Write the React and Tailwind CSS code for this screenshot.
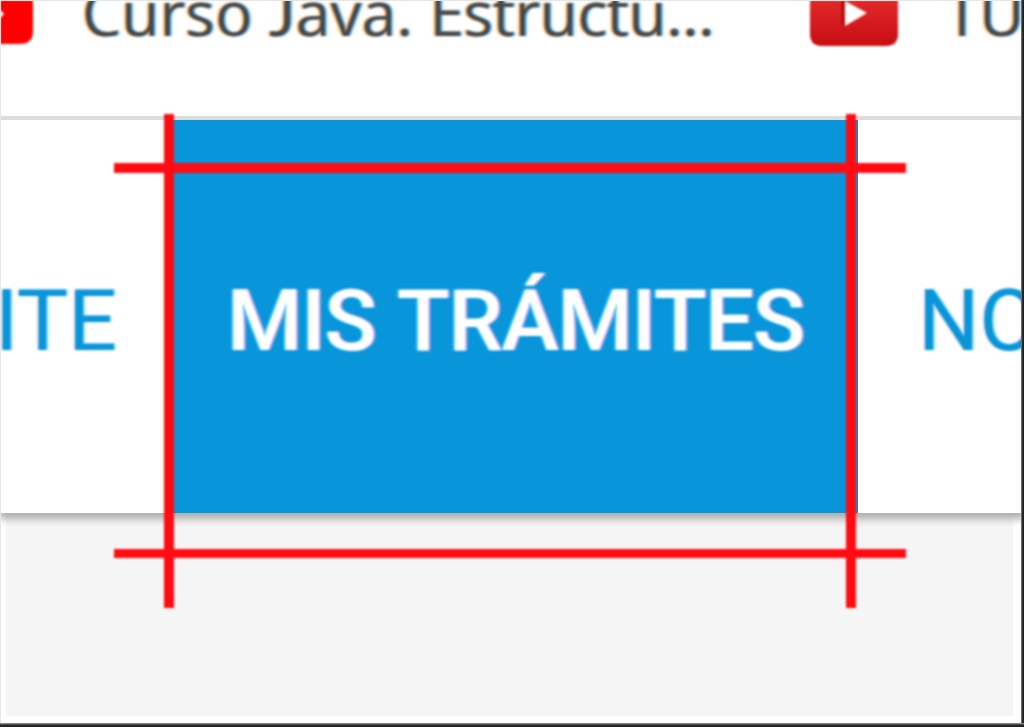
const softText = 'blur-[0.9px] whitespace-nowrap';
const barText =
  softText +
  " font-['Open_Sans',sans-serif] text-[62px] leading-[25px] text-[#45484d] [text-shadow:-2px_0_1px_#ffb860,2px_0_1px_#6fc8ff]";
const navText = softText + " font-['Roboto',sans-serif] text-[86px] leading-none";

function PlayIcon() {
  return (
    <svg className="block h-[48px] w-[90px] shrink-0 blur-[1.2px]" viewBox="0 0 90 48">
      <defs>
        <linearGradient id="play-red" x1="0" y1="0" x2="0" y2="1">
          <stop offset="0" stopColor="#e42b2b" />
          <stop offset="1" stopColor="#c60e14" />
        </linearGradient>
      </defs>
      <path d="M1 -4H89V34Q89 46 77 46H13Q1 46 1 34Z" fill="url(#play-red)" />
      <path d="M32 2V25L36 26V1Z" fill="#b80e12" />
      <path d="M36 1L58 13L36 26Z" fill="#fff" />
    </svg>
  );
}

function BookmarksBar() {
  return (
    <div className="flex h-[116px] items-start overflow-hidden">
      <svg className="block h-[46px] w-[36px] shrink-0 blur-[1.2px]" viewBox="0 0 36 46">
        <path d="M-5 -4H33V31Q33 44 20 44H-5Z" fill="#ff0000" />
        <path d="M-5 4L4 14L-5 24Z" fill="#fff" />
      </svg>
      <div className="w-[773px] shrink-0 pl-[46px]">
        <span className={barText + ' block tracking-[0.3px]'}>
          Curso <span className="font-['Lato',sans-serif] text-[62px]">J</span>ava.{' '}
          <span className="tracking-[-0.3px]">Estructu...</span>
        </span>
      </div>
      <PlayIcon />
      <div className="shrink-0 pl-[46px]">
        <span className={barText + ' block'}>TU</span>
      </div>
    </div>
  );
}

function NavBar() {
  return (
    <div className="relative z-10 flex h-[393px] shrink-0 items-center bg-white shadow-[0_5px_8px_1px_#acacac] [clip-path:inset(0_0_-14px_0)]">
      <div className="flex w-[166px] shrink-0 justify-end pt-[9px] pr-[49px]">
        <span className={navText + ' text-[#0895d9] [text-shadow:-2px_0_1px_#ffdfe5,2px_0_1px_#9de4ff]'}>ITE</span>
      </div>
      <div className="flex h-full w-[692px] shrink-0 items-center bg-[#0895d9] pt-[9px] pl-[61px]">
        <span className={navText + ' tracking-[-1px] [word-spacing:3px] font-medium text-white [text-shadow:-2px_0_1px_#2fc4ff,2px_0_1px_#c9a5e5]'}>
          MIS TRÁMITES
        </span>
      </div>
      <div className="shrink-0 pt-[9px] pl-[60px]">
        <span className={navText + ' block text-[#0895d9] [text-shadow:-2px_0_1px_#ffdfe5,2px_0_1px_#9de4ff]'}>NO</span>
      </div>
    </div>
  );
}

function Guides() {
  return (
    <div className="absolute inset-0 z-20 blur-[1px]">
      <div className="absolute top-[163px] left-[114px] h-[10px] w-[792px] bg-[#ff0b12]" />
      <div className="absolute top-[549px] left-[114px] h-[9px] w-[792px] bg-[#ff0b12]" />
      <div className="absolute top-[114px] left-[164px] h-[494px] w-[10px] bg-[#ff0b12]" />
      <div className="absolute top-[114px] left-[846px] h-[494px] w-[10px] bg-[#ff0b12]" />
    </div>
  );
}

export default function App() {
  return (
    <div className="relative flex h-[727px] w-[1024px] flex-col overflow-hidden bg-white">
      <BookmarksBar />
      <div className="h-[4px] shrink-0 bg-[#dadee1] blur-[0.6px]" />
      <NavBar />
      <div className="mr-[11px] ml-[6px] h-[203px] shrink-0 bg-[#f5f5f5]" />
      <Guides />
      <div className="absolute inset-0 z-20 border-t border-l border-[#e6e6e6]" />
      <div className="absolute inset-y-0 right-0 z-20 w-[3px] bg-linear-to-r from-[#8a8a8a] to-[#202020] to-60%" />
      <div className="absolute inset-x-0 bottom-0 z-20 h-[4px] bg-linear-to-b from-[#a0a0a0] to-[#252525] to-60%" />
    </div>
  );
}
